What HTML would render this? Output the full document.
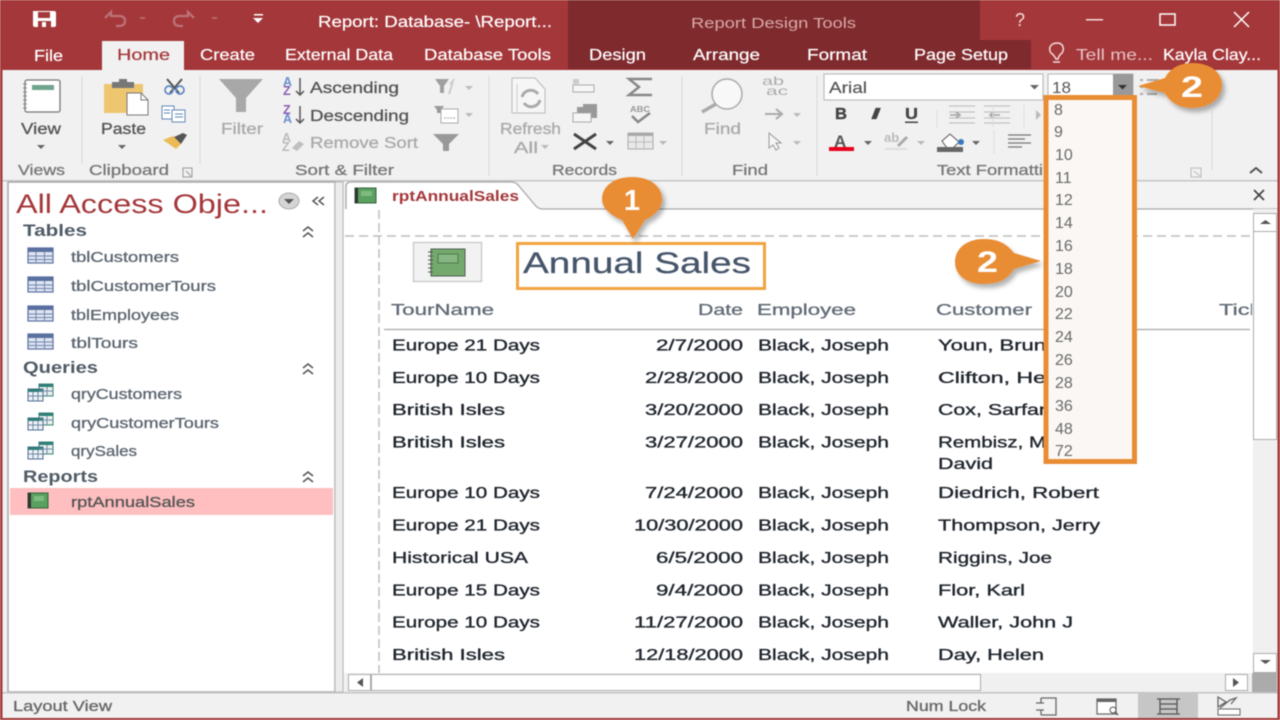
<!DOCTYPE html>
<html><head><meta charset="utf-8"><title>Report</title>
<style>
html,body{margin:0;padding:0;background:#f1f1f1;width:1280px;height:720px;overflow:hidden}
svg{display:block;filter:blur(.45px)}
text{font-family:"Liberation Sans",sans-serif}
.w{fill:#fff;font-size:16px;stroke:#fff;stroke-width:.2px}
.r{fill:#555;font-size:15.5px;stroke:#555;stroke-width:.3px}
.d{fill:#aaa;font-size:15.5px;stroke:#aaa;stroke-width:.3px}
.n{fill:#5c6570;font-size:15px;stroke:#5c6570;stroke-width:.3px}
.h{fill:#4f5b66;font-size:16.5px;font-weight:bold}
.b{fill:#20262e;font-size:16px;stroke:#20262e;stroke-width:.35px}
.c{fill:#616b76;font-size:16px;stroke:#616b76;stroke-width:.3px}
.z{fill:#6a6a6a;font-size:16px}
</style></head><body>
<svg width="1280" height="720" viewBox="0 0 1280 720" xmlns="http://www.w3.org/2000/svg">
<defs>
<g id="tb"><rect x="0" y="0" width="25" height="15" fill="#dfe5f1" stroke="#5a70a0" stroke-width="1.2"/><rect x="0" y="0" width="25" height="4" fill="#5a70a0"/><path d="M8 4v11M16.500 4v11M0 8h25M0 11.500h25" stroke="#6f84ae" stroke-width="1"/></g>
<g id="qr"><rect x="11" y="0" width="14" height="12" fill="#e8f0ee" stroke="#3d7f7a"/><rect x="11" y="0" width="14" height="3" fill="#2f7f78"/><rect x="0" y="5" width="15" height="12" fill="#eef2f6" stroke="#4a6a90"/><rect x="0" y="5" width="15" height="3" fill="#2f7f78"/><path d="M5 8v9M10 8v9M0 12h15M19 3v9M11 7h14" stroke="#6f8aa5"/></g>
<g id="chev"><path d="M-5 -1l5-4 5 4M-5 5l5-4 5 4" fill="none" stroke="#555" stroke-width="1.500"/></g>
<g id="arr"><path d="M-4 0h8l-4 4z" fill="#666"/></g>
<g id="arrl"><path d="M-4 0h8l-4 4z" fill="#bbb"/></g>
<filter id="sh" x="-20%" y="-20%" width="150%" height="150%"><feDropShadow dx="3" dy="4" stdDeviation="2.500" flood-color="#000" flood-opacity=".3"/></filter>
<clipPath id="cliprep"><rect x="345" y="210" width="907" height="463"/></clipPath>
</defs>

<rect width="1280" height="720" fill="#f1f1f1"/>
<!-- title bar -->
<rect width="1280" height="70" fill="#a4373a"/>
<rect x="568" y="0" width="412" height="41" fill="#7f2a2d"/>
<rect x="568" y="40" width="463" height="29" fill="#7f2a2d"/>
<rect x="102" y="41" width="82" height="29" fill="#f1f1f1"/>
<!-- save -->
<path d="M33 11h21q2 0 2 2v12q0 2-2 2H35q-2 0-2-2z" fill="#fff"/>
<rect x="38" y="12" width="12" height="6" fill="#a4373a"/><rect x="38" y="21" width="13" height="6" fill="#a4373a"/><rect x="42" y="22" width="4" height="5" fill="#fff"/>
<!-- undo redo -->
<path d="M105 18l6-6v4h8q6 0 6 5t-6 5h-3" fill="none" stroke="#bd7377" stroke-width="2.200"/>
<path d="M140 18h5M212 18h5" stroke="#b8666a" stroke-width="2"/>
<path d="M194 18l-6-6v4h-8q-6 0-6 5t6 5h3" fill="none" stroke="#bd7377" stroke-width="2.200"/>
<path d="M254 14h9v1.500h-9zM253 18h10l-5 5z" fill="#fff"/>
<text class="w" x="318" y="27" textLength="234" lengthAdjust="spacingAndGlyphs">Report: Database- \Report...</text>
<text x="691" y="28" fill="#d9aaa9" font-size="15" textLength="165" lengthAdjust="spacingAndGlyphs">Report Design Tools</text>
<text x="1015" y="26" fill="#f2dcdc" font-size="18">?</text>
<rect x="1086" y="19" width="17" height="1.500" fill="#f3dede"/>
<rect x="1160" y="14" width="15" height="11" fill="none" stroke="#fff" stroke-width="1.500"/>
<path d="M1234 12l15 15M1249 12l-15 15" stroke="#fff" stroke-width="1.500"/>
<!-- tabs -->
<text class="w" x="34" y="61" textLength="29" lengthAdjust="spacingAndGlyphs">File</text>
<text x="117" y="60" fill="#a4373a" font-size="16" textLength="53" lengthAdjust="spacingAndGlyphs" stroke="#a4373a" stroke-width=".2">Home</text>
<text class="w" x="200" y="60" textLength="55" lengthAdjust="spacingAndGlyphs">Create</text>
<text class="w" x="285" y="60" textLength="108" lengthAdjust="spacingAndGlyphs">External Data</text>
<text class="w" x="424" y="60" textLength="127" lengthAdjust="spacingAndGlyphs">Database Tools</text>
<text class="w" x="589" y="60" textLength="57" lengthAdjust="spacingAndGlyphs">Design</text>
<text class="w" x="693" y="60" textLength="67" lengthAdjust="spacingAndGlyphs">Arrange</text>
<text class="w" x="807" y="60" textLength="60" lengthAdjust="spacingAndGlyphs">Format</text>
<text class="w" x="914" y="60" textLength="94" lengthAdjust="spacingAndGlyphs">Page Setup</text>
<path d="M1056 59q-2-4-5-6-2-3-1-6 2-4 7-4t6 4q1 3-1 6-3 2-4 6zM1053 62h7" fill="none" stroke="#f2dcdc" stroke-width="1.500"/>
<text x="1076" y="60" fill="#e5c4c4" font-size="16" textLength="77" lengthAdjust="spacingAndGlyphs">Tell me...</text>
<text class="w" x="1163" y="60" textLength="98" lengthAdjust="spacingAndGlyphs">Kayla Clay...</text>

<!-- ribbon -->
<rect x="2" y="70" width="1276" height="111" fill="#f1f1f1"/>
<rect x="2" y="180" width="1276" height="1.500" fill="#c6c6c6"/>
<path d="M82 76v88M200 76v88M489 76v100M682 76v100M817 76v100M1212 110v60" stroke="#dcdcdc" stroke-width="1.200"/>
<!-- view -->
<rect x="25" y="80" width="35" height="32" rx="2" fill="#fff" stroke="#777" stroke-width="1.300"/>
<rect x="32" y="85" width="22" height="5" fill="#6fa48d"/>
<path d="M23 84h4M23 88h4M23 92h4M23 96h4M23 100h4M23 104h4M23 108h4" stroke="#888"/>
<text class="r" x="21" y="134" textLength="40" lengthAdjust="spacingAndGlyphs">View</text>
<use href="#arr" x="41" y="145"/>
<text class="n" x="18" y="175" textLength="47" lengthAdjust="spacingAndGlyphs" style="fill:#777;stroke:#777">Views</text>
<!-- paste -->
<rect x="104" y="84" width="39" height="29" fill="#eec670"/>
<rect x="112" y="82" width="22" height="6" fill="#777"/><rect x="119" y="79" width="8" height="5" fill="#777"/>
<path d="M127 93h14l7 7v15h-21z" fill="#fff" stroke="#777"/><path d="M141 93v7h7" fill="none" stroke="#777"/>
<text class="r" x="101" y="134" textLength="45" lengthAdjust="spacingAndGlyphs">Paste</text>
<use href="#arr" x="122" y="145"/>
<path d="M167 79l12 14M182 79l-12 14" stroke="#555" stroke-width="2"/>
<circle cx="169" cy="90" r="4" fill="none" stroke="#5b87c5" stroke-width="1.700"/><circle cx="180" cy="90" r="4" fill="none" stroke="#5b87c5" stroke-width="1.700"/>
<rect x="162" y="106" width="12" height="13" fill="#fff" stroke="#6088b8"/><rect x="172" y="110" width="13" height="12" fill="#fff" stroke="#6088b8"/>
<path d="M175 114h8M175 117h8M164 110h6M164 113h6" stroke="#6088b8"/>
<path d="M163 140l10-4 8 8-5 5z" fill="#edbb55"/><path d="M174 137l9-4 4 2-6 9z" fill="#555"/>
<text class="n" x="89" y="175" textLength="80" lengthAdjust="spacingAndGlyphs" style="fill:#777;stroke:#777">Clipboard</text>
<path d="M183 168h9v9h-9zM186 171l5 5" fill="none" stroke="#999"/>
<!-- filter -->
<path d="M219 79h44l-17 19v14h-10V98z" fill="#a8a8a8"/>
<text class="d" x="221" y="134" textLength="42" lengthAdjust="spacingAndGlyphs">Filter</text>
<text x="283" y="86" fill="#6a8fd0" font-size="12.500" font-weight="bold">A</text>
<text x="283" y="95" fill="#8a5fb5" font-size="12.500" font-weight="bold">Z</text>
<path d="M300 78v17m-4-4l4 4 4-4" fill="none" stroke="#555" stroke-width="1.500"/>
<text class="r" x="310" y="93" textLength="89" lengthAdjust="spacingAndGlyphs">Ascending</text>
<text x="283" y="114" fill="#8a5fb5" font-size="12.500" font-weight="bold">Z</text>
<text x="283" y="123" fill="#6a8fd0" font-size="12.500" font-weight="bold">A</text>
<path d="M300 106v17m-4-4l4 4 4-4" fill="none" stroke="#555" stroke-width="1.500"/>
<text class="r" x="310" y="121" textLength="99" lengthAdjust="spacingAndGlyphs">Descending</text>
<text x="282" y="142" fill="#bbb" font-size="12.500" font-weight="bold">A</text>
<text x="282" y="151" fill="#bbb" font-size="12.500" font-weight="bold">Z</text>
<path d="M292 148l7-7 5 3-7 7z" fill="#c0c0c0"/>
<text class="d" x="310" y="148" textLength="108" lengthAdjust="spacingAndGlyphs">Remove Sort</text>
<text class="n" x="295" y="175" textLength="99" lengthAdjust="spacingAndGlyphs" style="fill:#777;stroke:#777">Sort &amp; Filter</text>
<path d="M435 79h14l-5 7v7h-4v-7z" fill="#a0a0a0"/><path d="M450 84l3-3-2 7-2 6" stroke="#ccc" stroke-width="2" fill="none"/>
<use href="#arrl" x="469" y="86"/>
<path d="M434 106h10l-3 4v3h-4v-3z" fill="#999"/><rect x="441" y="109" width="17" height="14" fill="#fff" stroke="#aaa"/><path d="M444 118h11" stroke="#aaa" stroke-dasharray="2 1"/>
<use href="#arrl" x="469" y="113"/>
<path d="M433 134h26l-10 10v7h-6v-7z" fill="#999"/>
<!-- records -->
<path d="M512 78h23l10 11v24h-33z" fill="#f6f6f6" stroke="#bbb"/>
<path d="M517 84v28" stroke="#ccc"/>
<path d="M522 97a9 9 0 0 1 16-3M540 100a9 9 0 0 1-16 3" fill="none" stroke="#aaa" stroke-width="3"/>
<text class="d" x="500" y="134" textLength="61" lengthAdjust="spacingAndGlyphs">Refresh</text>
<text class="d" x="514" y="153" textLength="24" lengthAdjust="spacingAndGlyphs">All</text>
<use href="#arrl" x="545" y="145"/>
<rect x="573" y="85" width="21" height="7" fill="#f6f6f6" stroke="#aaa"/><rect x="573" y="79" width="6" height="5" fill="#ccc"/>
<path d="M577 107h6v-3h14v14h-14v-3h-6z" fill="#999"/><rect x="573" y="113" width="18" height="9" fill="#f6f6f6" stroke="#aaa"/>
<path d="M574 134l22 15M596 134l-22 15" stroke="#444" stroke-width="3"/>
<use href="#arr" x="610" y="141"/>
<path d="M652 79h-23l10 8-10 8h23" fill="none" stroke="#888" stroke-width="2.500"/>
<text x="630" y="112" fill="#999" font-size="8" font-weight="bold" textLength="20" lengthAdjust="spacingAndGlyphs">ABC</text>
<path d="M632 116l6 6 12-9" fill="none" stroke="#888" stroke-width="2.500"/>
<rect x="628" y="133" width="25" height="16" fill="#e8e8e8" stroke="#aaa"/><rect x="628" y="133" width="25" height="3" fill="#aaa"/><path d="M636 136v13M644 136v13M628 142h25" stroke="#bbb"/>
<use href="#arrl" x="663" y="141"/>
<text class="n" x="552" y="175" textLength="65" lengthAdjust="spacingAndGlyphs" style="fill:#777;stroke:#777">Records</text>
<!-- find -->
<circle cx="727" cy="94" r="15" fill="#f8f8f8" stroke="#aaa" stroke-width="1.500"/>
<path d="M716 104l-14 8" stroke="#aaa" stroke-width="3.500"/>
<text class="d" x="704" y="134" textLength="37" lengthAdjust="spacingAndGlyphs">Find</text>
<text x="762" y="85" fill="#aaa" font-size="12" textLength="22" lengthAdjust="spacingAndGlyphs">ab</text>
<text x="766" y="95" fill="#aaa" font-size="12" textLength="22" lengthAdjust="spacingAndGlyphs">ac</text>
<path d="M765 114h17m-6-5l6 5-6 5" fill="none" stroke="#aaa" stroke-width="2"/>
<use href="#arrl" x="797" y="113"/>
<path d="M769 133v15l4-3 3 5 3-2-3-5h5z" fill="#f5f5f5" stroke="#999"/>
<use href="#arrl" x="797" y="141"/>
<text class="n" x="732" y="175" textLength="36" lengthAdjust="spacingAndGlyphs" style="fill:#777;stroke:#777">Find</text>
<!-- font -->
<rect x="824" y="74" width="219" height="26" fill="#fff" stroke="#b5b5b5"/>
<text x="829" y="93" fill="#555" font-size="16" textLength="38" lengthAdjust="spacingAndGlyphs" stroke="#555" stroke-width=".2">Arial</text>
<path d="M1030 85h9l-4.500 4.500z" fill="#666"/>
<rect x="1048" y="74" width="85" height="26" fill="#fff" stroke="#b5b5b5"/>
<text x="1052" y="93" fill="#555" font-size="16" textLength="19" lengthAdjust="spacingAndGlyphs">18</text>
<rect x="1113" y="74" width="20" height="26" fill="#999"/>
<path d="M1118 85h9l-4.500 4.500z" fill="#333"/>
<path d="M1140 80h3M1147 80h12M1140 87h3M1147 87h10M1140 94h3M1147 94h10" stroke="#aaa" stroke-width="2"/>
<text x="835" y="119" fill="#444" font-size="16" font-weight="bold" stroke="#444" stroke-width=".4" textLength="12" lengthAdjust="spacingAndGlyphs">B</text>
<text x="871" y="119" fill="#444" font-size="16" font-weight="bold" font-style="italic" stroke="#444" stroke-width=".3" textLength="9" lengthAdjust="spacingAndGlyphs">I</text>
<text x="905" y="119" fill="#444" font-size="16" font-weight="bold" stroke="#444" stroke-width=".3" textLength="13" lengthAdjust="spacingAndGlyphs">U</text>
<rect x="905" y="121.500" width="13" height="1.500" fill="#444"/>
<text x="834" y="147" fill="#555" font-size="17" font-weight="bold">A</text>
<rect x="829" y="147" width="25" height="4" fill="#e8001c"/>
<use href="#arr" x="868" y="141"/>
<text x="884" y="142" fill="#bbb" font-size="13" font-weight="bold">ab</text><path d="M898 146l9-9" stroke="#aaa" stroke-width="3"/>
<rect x="885" y="148" width="22" height="2" fill="#ddd"/>
<use href="#arrl" x="921" y="141"/>
<path d="M942 141l8-7 9 8-6 6h-6z" fill="#fff" stroke="#555"/><circle cx="961" cy="142" r="3" fill="#3a78c0"/><rect x="937" y="147" width="26" height="5" fill="#666"/>
<use href="#arr" x="976" y="141"/>
<path d="M1008 135h23M1008 139h17M1008 143h23M1008 147h14" stroke="#777" stroke-width="1.300"/>
<path d="M949 106h26M949 112h26M949 118h26M949 123h26M984 106h26M984 112h26M984 118h26M984 123h26" stroke="#bbb" stroke-width="1"/>
<path d="M950 115h9m-3-3l4 3-4 3M1000 115h-9m3-3l-4 3 4 3" fill="none" stroke="#aaa" stroke-width="1.800"/>
<path d="M937 110v18M993 105v22M1024 105v22M994 130v24" stroke="#ddd"/>
<path d="M1036 110l5 5-5 5z" fill="#bbb"/>
<text class="n" x="937" y="175" style="fill:#777;stroke:#777" textLength="106" lengthAdjust="spacingAndGlyphs">Text Formatti</text>
<path d="M1191 168h10v9h-10zM1194 171l6 5" fill="none" stroke="#bbb"/>
<path d="M1250 173l6-5 6 5" fill="none" stroke="#555" stroke-width="2"/>

<!-- nav pane -->
<rect x="8" y="182" width="327" height="510" fill="#fff" stroke="#a8a8a8" stroke-width="1.500"/>
<rect x="335" y="182" width="8" height="510" fill="#ececec" stroke="#b5b5b5"/>
<text x="16" y="213" fill="#a4373a" font-size="27" textLength="252" lengthAdjust="spacingAndGlyphs">All Access Obje...</text>
<ellipse cx="289" cy="201" rx="10" ry="8" fill="#d5d5d5" stroke="#aaa"/><path d="M284 199h10l-5 5z" fill="#555"/>
<path d="M318 197l-5 4 5 4M324 197l-5 4 5 4" fill="none" stroke="#555" stroke-width="1.500"/>
<text class="h" x="23" y="236" textLength="64" lengthAdjust="spacingAndGlyphs">Tables</text>
<use href="#chev" x="308" y="232"/>
<use href="#tb" x="28" y="248"/><text class="n" x="71" y="262" textLength="108" lengthAdjust="spacingAndGlyphs">tblCustomers</text>
<use href="#tb" x="28" y="277"/><text class="n" x="71" y="291" textLength="145" lengthAdjust="spacingAndGlyphs">tblCustomerTours</text>
<use href="#tb" x="28" y="306"/><text class="n" x="71" y="320" textLength="108" lengthAdjust="spacingAndGlyphs">tblEmployees</text>
<use href="#tb" x="28" y="334"/><text class="n" x="71" y="348" textLength="67" lengthAdjust="spacingAndGlyphs">tblTours</text>
<text class="h" x="23" y="373" textLength="75" lengthAdjust="spacingAndGlyphs">Queries</text>
<use href="#chev" x="308" y="369"/>
<use href="#qr" x="28" y="384"/><text class="n" x="71" y="399" textLength="111" lengthAdjust="spacingAndGlyphs">qryCustomers</text>
<use href="#qr" x="28" y="413"/><text class="n" x="71" y="428" textLength="148" lengthAdjust="spacingAndGlyphs">qryCustomerTours</text>
<use href="#qr" x="28" y="442"/><text class="n" x="71" y="456" textLength="66" lengthAdjust="spacingAndGlyphs">qrySales</text>
<text class="h" x="23" y="482" textLength="75" lengthAdjust="spacingAndGlyphs">Reports</text>
<use href="#chev" x="308" y="477"/>
<rect x="10" y="488" width="323" height="27" fill="#ffbfc0"/>
<rect x="28" y="493" width="20" height="15" fill="#5aa060" stroke="#35603a"/><rect x="28" y="493" width="3" height="15" fill="#333"/><rect x="34" y="496" width="10" height="5" fill="#7fbb80"/>
<text class="n" x="71" y="507" textLength="124" lengthAdjust="spacingAndGlyphs" style="fill:#555;stroke:#555">rptAnnualSales</text>

<!-- document -->
<rect x="344" y="182" width="934" height="28" fill="#f3f3f3"/>
<rect x="344" y="209" width="909" height="464" fill="#fff"/>
<path d="M346 209v-22q0-5 5-5h160q5 0 8 4l16 19q3 4 8 4h735" fill="#fff" stroke="#a8a8a8" stroke-width="1.300"/>
<rect x="355" y="188" width="21" height="15" fill="#5aa060" stroke="#35603a"/><rect x="355" y="188" width="3" height="15" fill="#333"/><rect x="361" y="191" width="11" height="5" fill="#7fbb80"/>
<text x="392" y="201" fill="#a4373a" font-size="14.500" font-weight="bold" textLength="127" lengthAdjust="spacingAndGlyphs">rptAnnualSales</text>
<path d="M1254 190l10 10M1264 190l-10 10" stroke="#444" stroke-width="1.700"/>
<path d="M345 236H1250" stroke="#bdbdbd" stroke-width="1.500" stroke-dasharray="9 5"/>
<path d="M379 210V673" stroke="#bdbdbd" stroke-width="1.500" stroke-dasharray="9 4"/>
<rect x="413.500" y="242.500" width="68" height="39" fill="#f2f2f2" stroke="#c8c8c8" stroke-width="1.300"/>
<rect x="431" y="249" width="34" height="27" fill="#73a96d" stroke="#4f5f4f"/>
<path d="M428 252h5M428 256h5M428 260h5M428 264h5M428 268h5M428 272h5" stroke="#555"/>
<rect x="438" y="254" width="20" height="9" fill="#86b682" stroke="#4e7a50"/>
<rect x="517.500" y="243.500" width="247" height="45" fill="#fff" stroke="#f2a440" stroke-width="3"/>
<text x="523" y="273" fill="#46556b" font-size="30" textLength="228" lengthAdjust="spacingAndGlyphs" stroke="#46556b" stroke-width=".25">Annual Sales</text>
<g clip-path="url(#cliprep)">
<text class="c" x="391" y="315" textLength="103" lengthAdjust="spacingAndGlyphs">TourName</text>
<text class="c" x="698" y="315" textLength="45" lengthAdjust="spacingAndGlyphs">Date</text>
<text class="c" x="757" y="315" textLength="99" lengthAdjust="spacingAndGlyphs">Employee</text>
<text class="c" x="936" y="315" textLength="96" lengthAdjust="spacingAndGlyphs">Customer</text>
<text class="c" x="1219" y="315" textLength="62" lengthAdjust="spacingAndGlyphs">Ticket</text>
</g>
<path d="M384 329.500H1250" stroke="#a8a8a8" stroke-width="1.300"/>
<!-- rows -->
<text class="b" x="392" y="350.500" textLength="148" lengthAdjust="spacingAndGlyphs">Europe 21 Days</text><text class="b" x="656" y="350.500" textLength="87" lengthAdjust="spacingAndGlyphs">2/7/2000</text><text class="b" x="758" y="350.500" textLength="131" lengthAdjust="spacingAndGlyphs">Black, Joseph</text><text class="b" x="938" y="350.500" textLength="108" lengthAdjust="spacingAndGlyphs">Youn, Brun</text>
<text class="b" x="392" y="383" textLength="148" lengthAdjust="spacingAndGlyphs">Europe 10 Days</text><text class="b" x="645" y="383" textLength="98" lengthAdjust="spacingAndGlyphs">2/28/2000</text><text class="b" x="758" y="383" textLength="131" lengthAdjust="spacingAndGlyphs">Black, Joseph</text><text class="b" x="938" y="383" textLength="108" lengthAdjust="spacingAndGlyphs">Clifton, He</text>
<text class="b" x="392" y="415" textLength="113" lengthAdjust="spacingAndGlyphs">British Isles</text><text class="b" x="645" y="415" textLength="98" lengthAdjust="spacingAndGlyphs">3/20/2000</text><text class="b" x="758" y="415" textLength="131" lengthAdjust="spacingAndGlyphs">Black, Joseph</text><text class="b" x="938" y="415" textLength="108" lengthAdjust="spacingAndGlyphs">Cox, Sarfar</text>
<text class="b" x="392" y="447.500" textLength="113" lengthAdjust="spacingAndGlyphs">British Isles</text><text class="b" x="645" y="447.500" textLength="98" lengthAdjust="spacingAndGlyphs">3/27/2000</text><text class="b" x="758" y="447.500" textLength="131" lengthAdjust="spacingAndGlyphs">Black, Joseph</text><text class="b" x="938" y="447.500" textLength="108" lengthAdjust="spacingAndGlyphs">Rembisz, M</text>
<text class="b" x="938" y="469" textLength="55" lengthAdjust="spacingAndGlyphs">David</text>
<text class="b" x="392" y="498" textLength="148" lengthAdjust="spacingAndGlyphs">Europe 10 Days</text><text class="b" x="645" y="498" textLength="98" lengthAdjust="spacingAndGlyphs">7/24/2000</text><text class="b" x="758" y="498" textLength="131" lengthAdjust="spacingAndGlyphs">Black, Joseph</text><text class="b" x="938" y="498" textLength="161" lengthAdjust="spacingAndGlyphs">Diedrich, Robert</text>
<text class="b" x="392" y="530.500" textLength="148" lengthAdjust="spacingAndGlyphs">Europe 21 Days</text><text class="b" x="634" y="530.500" textLength="109" lengthAdjust="spacingAndGlyphs">10/30/2000</text><text class="b" x="758" y="530.500" textLength="131" lengthAdjust="spacingAndGlyphs">Black, Joseph</text><text class="b" x="938" y="530.500" textLength="162" lengthAdjust="spacingAndGlyphs">Thompson, Jerry</text>
<text class="b" x="392" y="563" textLength="136" lengthAdjust="spacingAndGlyphs">Historical USA</text><text class="b" x="656" y="563" textLength="87" lengthAdjust="spacingAndGlyphs">6/5/2000</text><text class="b" x="758" y="563" textLength="131" lengthAdjust="spacingAndGlyphs">Black, Joseph</text><text class="b" x="938" y="563" textLength="114" lengthAdjust="spacingAndGlyphs">Riggins, Joe</text>
<text class="b" x="392" y="595.500" textLength="148" lengthAdjust="spacingAndGlyphs">Europe 15 Days</text><text class="b" x="656" y="595.500" textLength="87" lengthAdjust="spacingAndGlyphs">9/4/2000</text><text class="b" x="758" y="595.500" textLength="131" lengthAdjust="spacingAndGlyphs">Black, Joseph</text><text class="b" x="938" y="595.500" textLength="87" lengthAdjust="spacingAndGlyphs">Flor, Karl</text>
<text class="b" x="392" y="627.500" textLength="148" lengthAdjust="spacingAndGlyphs">Europe 10 Days</text><text class="b" x="634" y="627.500" textLength="109" lengthAdjust="spacingAndGlyphs">11/27/2000</text><text class="b" x="758" y="627.500" textLength="131" lengthAdjust="spacingAndGlyphs">Black, Joseph</text><text class="b" x="938" y="627.500" textLength="135" lengthAdjust="spacingAndGlyphs">Waller, John J</text>
<text class="b" x="392" y="660" textLength="113" lengthAdjust="spacingAndGlyphs">British Isles</text><text class="b" x="634" y="660" textLength="109" lengthAdjust="spacingAndGlyphs">12/18/2000</text><text class="b" x="758" y="660" textLength="131" lengthAdjust="spacingAndGlyphs">Black, Joseph</text><text class="b" x="938" y="660" textLength="106" lengthAdjust="spacingAndGlyphs">Day, Helen</text>

<!-- scrollbars -->
<rect x="1253" y="209" width="24" height="464" fill="#f0f0f0"/>
<rect x="1253.500" y="213.500" width="23" height="18" fill="#fff" stroke="#ababab"/>
<path d="M1260 224h11l-5.500-4z" fill="#555"/>
<rect x="1253.500" y="231.500" width="23" height="208" fill="#fff" stroke="#ababab"/>
<rect x="1253.500" y="653.500" width="23" height="19" fill="#fff" stroke="#ababab"/>
<path d="M1260 660h11l-5.500 4z" fill="#555"/>
<rect x="346" y="673" width="906" height="20" fill="#f0f0f0"/>
<rect x="348.500" y="674.500" width="22" height="16" fill="#fff" stroke="#ababab"/>
<path d="M363 678v9l-6-4.500z" fill="#555"/>
<rect x="371.500" y="674.500" width="609" height="16" fill="#fff" stroke="#ababab"/>
<rect x="1225.500" y="674.500" width="22" height="16" fill="#fff" stroke="#ababab"/>
<path d="M1233 678v9l6-4.500z" fill="#555"/>
<rect x="1252" y="673" width="25" height="20" fill="#ababab"/>

<!-- status -->
<rect x="2" y="692" width="1276" height="26" fill="#f1f1f1"/>
<rect x="2" y="692" width="1276" height="1.500" fill="#c4c4c4"/>
<text class="n" x="13" y="711" textLength="99" lengthAdjust="spacingAndGlyphs" style="fill:#666;stroke:#666">Layout View</text>
<text class="n" x="906" y="711" textLength="80" lengthAdjust="spacingAndGlyphs" style="fill:#666;stroke:#666">Num Lock</text>
<path d="M1041 698h15v17h-15M1041 698v5M1041 710v5M1036 703h8M1036 710h8" fill="none" stroke="#666" stroke-width="1.300"/>
<rect x="1097" y="699" width="19" height="15" fill="#fff" stroke="#666" stroke-width="1.200"/><rect x="1097" y="699" width="19" height="3" fill="#666"/>
<circle cx="1113" cy="710" r="3" fill="#fff" stroke="#555"/><path d="M1115 712l3 3" stroke="#555" stroke-width="1.500"/>
<rect x="1138" y="693" width="60" height="25" fill="#c6c6c6"/>
<path d="M1160 699h17v15h-17zM1160 704h17M1160 709h17M1157 699h3M1157 714h3M1177 699h3M1177 714h3" fill="none" stroke="#555" stroke-width="1.300"/>
<path d="M1218 697v10l8-5zM1220 708l10-8 6-2-5 6" fill="none" stroke="#666" stroke-width="1.300"/>
<rect x="1218" y="709" width="22" height="6" fill="#fff" stroke="#666"/>

<!-- borders -->
<rect x="0" y="0" width="2.500" height="720" fill="#a4373a"/>
<rect x="1277.500" y="0" width="2.500" height="720" fill="#a4373a"/>
<rect x="0" y="718" width="1280" height="2" fill="#a4373a"/>

<!-- dropdown -->
<rect x="1046" y="97.500" width="88.500" height="364" fill="#faf7f4" stroke="#e98d35" stroke-width="5"/>
<text class="z" x="1054" y="115">8</text>
<text class="z" x="1054" y="137">9</text>
<text class="z" x="1055" y="160">10</text>
<text class="z" x="1055" y="183">11</text>
<text class="z" x="1055" y="205">12</text>
<text class="z" x="1055" y="228">14</text>
<text class="z" x="1055" y="251">16</text>
<text class="z" x="1055" y="274">18</text>
<text class="z" x="1055" y="297">20</text>
<text class="z" x="1055" y="319">22</text>
<text class="z" x="1055" y="342">24</text>
<text class="z" x="1055" y="365">26</text>
<text class="z" x="1055" y="388">28</text>
<text class="z" x="1055" y="411">36</text>
<text class="z" x="1055" y="434">48</text>
<text class="z" x="1055" y="456">72</text>

<!-- callouts -->
<path d="M632 177c19 0 30 10 30 22 0 10-8 17-17 21l-12 19-11-19c-10-4-20-11-20-21 0-12 11-22 30-22z" fill="#e98d35" filter="url(#sh)"/>
<text x="632" y="210" fill="#fff" font-size="29" font-weight="bold" text-anchor="middle">1</text>
<path d="M984 239c18 0 25 8 30 14l27 8-27 8c-5 8-12 15-30 15s-29-9-29-22 11-23 29-23z" fill="#e98d35" filter="url(#sh)"/>
<text x="977" y="272" fill="#fff" font-size="30" font-weight="bold" textLength="21" lengthAdjust="spacingAndGlyphs">2</text>
<path d="M1192 63c18 0 30 9 30 22s-12 23-30 23c-14 0-23-7-27-15l-27-7 27-8c4-8 13-15 27-15z" fill="#e98d35" filter="url(#sh)"/>
<text x="1181" y="97" fill="#fff" font-size="30" font-weight="bold" textLength="22" lengthAdjust="spacingAndGlyphs">2</text>
</svg>
</body></html>
